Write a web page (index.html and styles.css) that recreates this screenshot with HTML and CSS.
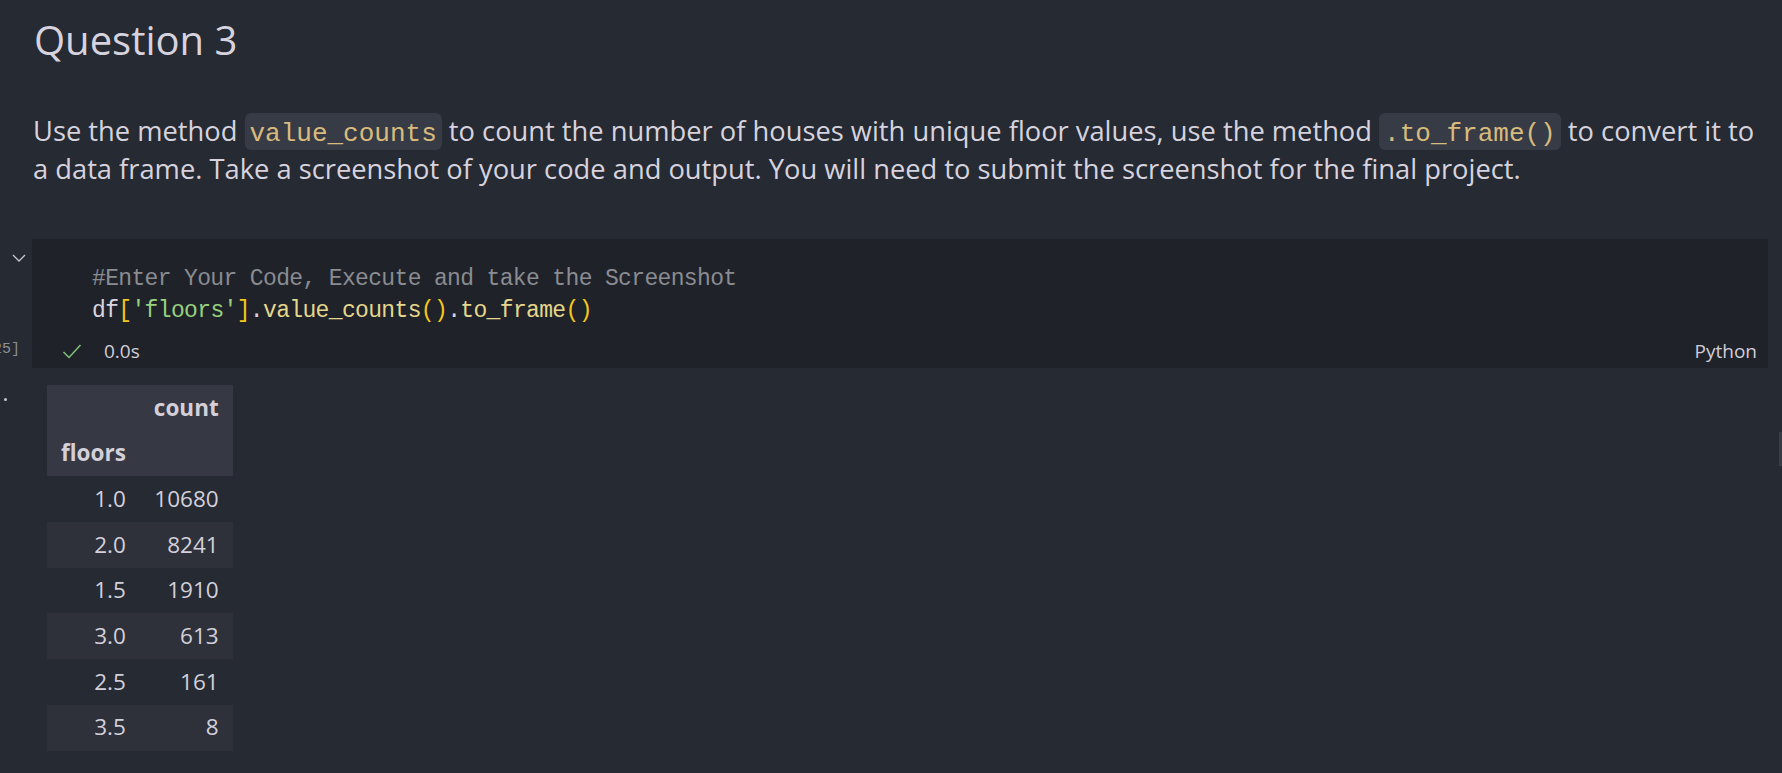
FILE: index.html
```html
<!DOCTYPE html>
<html lang="en">
<head>
<meta charset="utf-8">
<title>Question 3</title>
<link rel="stylesheet" href="styles.css">
</head>
<body>
<main class="notebook">
  <section class="md-cell">
    <h2 class="md-heading">Question 3</h2>
    <p class="md-text">Use the method <code class="inline-code">value_counts</code> to count the number of houses with unique floor values, use the method <code class="inline-code">.to_frame()</code> to convert it to a data frame. Take a screenshot of your code and output. You will need to submit the screenshot for the final project.</p>
  </section>

  <section class="code-cell">
    <div class="gutter">
      <svg class="chevron" width="14" height="8" viewBox="0 0 14 8"><path d="M1 1 L7 7 L13 1" fill="none" stroke="#c8c6cf" stroke-width="1.3"/></svg>
      <div class="exec-count"><span>[25]</span></div>
    </div>
    <div class="cell-body">
      <pre class="code"><span class="c-comment">#Enter Your Code, Execute and take the Screenshot</span>
<span class="c-var">df</span><span class="c-br">[</span><span class="c-str">'floors'</span><span class="c-br">]</span><span class="c-punc">.</span><span class="c-fn">value_counts</span><span class="c-br">()</span><span class="c-punc">.</span><span class="c-fn">to_frame</span><span class="c-br">()</span></pre>
      <div class="status">
        <svg class="check" width="20" height="17" viewBox="0 0 20 17"><path d="M1.5 9 L7 14.5 L18.5 2" fill="none" stroke="#7fc47b" stroke-width="1.5"/></svg>
        <span class="duration">0.0s</span>
        <span class="lang">Python</span>
      </div>
    </div>
  </section>

  <section class="output">
    <div class="out-gutter"><span class="dot"></span></div>
    <table class="df">
      <thead>
        <tr class="hdr"><th></th><th class="num">count</th></tr>
        <tr class="hdr"><th class="idx-name">floors</th><th></th></tr>
      </thead>
      <tbody>
        <tr><th class="idx">1.0</th><td class="num">10680</td></tr>
        <tr><th class="idx">2.0</th><td class="num">8241</td></tr>
        <tr><th class="idx">1.5</th><td class="num">1910</td></tr>
        <tr><th class="idx">3.0</th><td class="num">613</td></tr>
        <tr><th class="idx">2.5</th><td class="num">161</td></tr>
        <tr><th class="idx">3.5</th><td class="num">8</td></tr>
      </tbody>
    </table>
  </section>
</main>
<div class="scroll-marker"></div>
</body>
</html>
```

FILE: styles.css
```css
html, body {
  margin: 0;
  padding: 0;
  background: #262a33;
  height: 100%;
  overflow: hidden;
}

body {
  font-family: "Open Sans", "Noto Sans", sans-serif;
  color: #d6d3de;
  position: relative;
}

.notebook {
  display: flex;
  flex-direction: column;
}

.md-cell {
  padding: 12px 14px 0 33px;
}

.md-heading {
  margin: 0;
  font-size: 40px;
  font-weight: 400;
  line-height: 56px;
  padding-left: 1px;
  color: #d6d2de;
}

.md-text {
  margin: 44px 0 0 0;
  font-size: 27.3px;
  line-height: 38px;
  color: #d6d3de;
}

.inline-code {
  font-family: "Liberation Mono", "DejaVu Sans Mono", monospace;
  font-size: 26px;
  line-height: 1;
  letter-spacing: 0;
  color: #d9bb7e;
  background: #373b45;
  border-radius: 6px;
  padding: 6px 5px 1px;
}

.code-cell {
  display: flex;
  margin-top: 51px;
}

.gutter {
  width: 32px;
  flex: none;
  display: flex;
  flex-direction: column;
  justify-content: space-between;
  padding: 15px 0 6px;
}

.chevron {
  margin-left: 12px;
  display: block;
}

.exec-count {
  display: flex;
  justify-content: flex-end;
  overflow: hidden;
  padding-right: 12px;
  font-family: "Liberation Mono", "DejaVu Sans Mono", monospace;
  font-size: 15px;
  line-height: 24px;
  color: #8d8f96;
  white-space: nowrap;
}

.cell-body {
  flex: 1;
  margin-right: 14px;
  background: #1f2229;
  padding-top: 24px;
}

.code {
  margin: 0;
  padding-left: 60px;
  font-family: "Liberation Mono", "DejaVu Sans Mono", monospace;
  font-size: 23px;
  letter-spacing: -0.65px;
  line-height: 32px;
  color: #d8d4e0;
}

.c-comment { color: #8a8c92; }
.c-var { color: #d8d4e0; }
.c-br { color: #f5c71a; }
.c-str { color: #97d17f; }
.c-fn { color: #e5d78c; }
.c-punc { color: #d8d4e0; }

.status {
  display: flex;
  align-items: center;
  height: 34px;
  margin-top: 7px;
  padding: 0 11px 0 30px;
  font-size: 19px;
}

.check {
  display: block;
}

.duration {
  margin-left: 22px;
  color: #d0cdd8;
}

.lang {
  margin-left: auto;
  color: #d0cdd8;
}

.output {
  display: flex;
  padding-top: 17px;
}

.out-gutter {
  width: 47px;
  flex: none;
}

.dot {
  display: block;
  width: 3px;
  height: 3px;
  border-radius: 50%;
  background: #c8c6cf;
  margin: 13px 0 0 4px;
}

.df {
  border-collapse: collapse;
  border-spacing: 0;
  font-size: 22.5px;
  color: #d3d0da;
}

.df th, .df td {
  height: 45.7px;
  padding: 0 14px;
  box-sizing: border-box;
  line-height: 1;
  text-align: right;
  font-weight: 400;
}

.df thead th {
  font-weight: 700;
}

.df .hdr {
  background: #363943;
}

.df .idx-name {
  text-align: left;
}

.df tbody tr:nth-child(even) {
  background: #2e313a;
}

.scroll-marker {
  position: absolute;
  right: 0;
  top: 432px;
  width: 3px;
  height: 34px;
  background: #3a3d46;
}
```
